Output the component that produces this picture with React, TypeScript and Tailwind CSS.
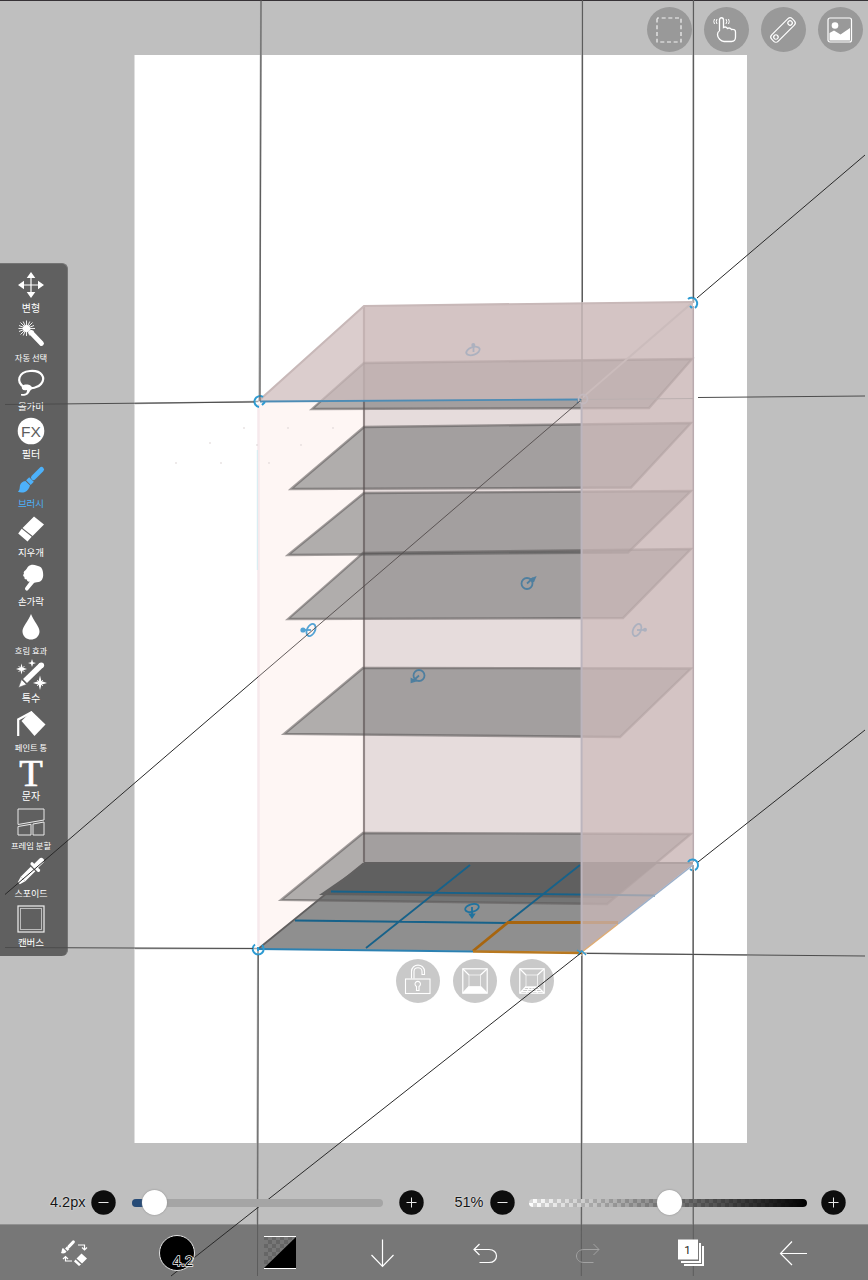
import React from "react";

const KR = "font-['Noto_Sans_CJK_KR',sans-serif]";

function Icon({ size = 28, children }: { size?: number; children: React.ReactNode }) {
  return (
    <svg width={size} height={size} viewBox="0 0 28 28" fill="none" stroke="none" className="block shrink-0 overflow-visible">
      {children}
    </svg>
  );
}

const tools: { label: string; size: string; active?: boolean; icon: React.ReactNode }[] = [
  {
    label: "변형",
    size: "text-[10px]",
    icon: (
      <>
        <path d="M14 4V24M4 14H24" stroke="#fff" strokeWidth="1.2" />
        <path d="M14 1L18.3 7H9.700ZM14 27L18.300 21H9.700ZM1 14L7 9.700V18.300ZM27 14L21 9.700V18.300Z" fill="#fff" />
      </>
    ),
  },
  {
    label: "자동 선택",
    size: "text-[8.300px]",
    icon: (
      <>
        <path d="M14 12.500L24.500 23.500" stroke="#fff" strokeWidth="4.800" strokeLinecap="round" />
        <circle cx="9.500" cy="8.500" r="3.600" fill="#fff" />
        <path d="M9.500 .5V16M1.500 8.500H18M3.500 2.500L15.500 14.500M15.500 2.500L3.500 14.500M6.200 1.500L12.800 15.500M12.800 1.500L6.200 15.500M2 5.500L17 11.500M17 5.500L2 11.500" stroke="#fff" strokeWidth=".9" />
      </>
    ),
  },
  {
    label: "올가미",
    size: "text-[9.500px]",
    icon: (
      <>
        <path d="M7 18C-1 13 1 3 13 2C25 1 29 9 24 15C21 19 14 20 10 18" stroke="#fff" strokeWidth="2.200" />
        <path d="M5 17C9 14 15 16 15 19C15 21 13 21 13 22C11 27 7 27 4 26.500V25C8 25 10 25 10 21C6 22 4 20 5 17Z" fill="#fff" />
      </>
    ),
  },
  {
    label: "필터",
    size: "text-[10px]",
    icon: (
      <>
        <circle cx="14" cy="14" r="13.300" fill="#fff" />
        <text x="14" y="19.700" fontSize="15.500" textAnchor="middle" fill="#5d5d5d" fontFamily="Liberation Sans, sans-serif">FX</text>
      </>
    ),
  },
  {
    label: "브러시",
    size: "text-[9.500px]",
    active: true,
    icon: (
      <>
        <path d="M16.500 11.500L24.500 3.500" stroke="#4db1fa" strokeWidth="5" strokeLinecap="round" />
        <path d="M12.200 11.200L16.800 15.800L13.700 18.900L9.100 14.300Z" fill="#4db1fa" />
        <path d="M8.400 15L13 19.600C12 23 10.500 25 8 26C5 27 2.500 26.500 .8 25.500C3 24.500 2.500 22 3 19.500C3.600 17 5.500 15.300 8.400 15Z" fill="#4db1fa" />
      </>
    ),
  },
  {
    label: "지우개",
    size: "text-[9.500px]",
    icon: (
      <path d="M17 1.500L27 9.500L15.600 21L5.500 13ZM4.700 13.800L14.700 21.800L10.500 26.500L1.200 18.500Z" fill="#fff" />
    ),
  },
  {
    label: "손가락",
    size: "text-[9.500px]",
    icon: (
      <path d="M13.300 1.300C17 0 20 2 22.500 2.600C25 3.300 26.200 7 26.200 11C26.200 14.500 24.500 17.500 21.500 18C19 18.500 17.500 18 16.500 19.500L11.300 25.800C9.500 28 7 25.500 8.400 23.500L12.800 17.600C11 18 9.800 17 10 15.500C8 15.800 7 14.500 7.500 13C5.500 12 6 10.500 7 9.700C5.900 7.500 8.700 6.500 9.700 4.800C10.700 3 11.500 1.900 13.300 1.300Z" fill="#fff" />
    ),
  },
  {
    label: "흐림 효과",
    size: "text-[8.300px]",
    icon: <path d="M14 1C16.500 8 23 14 22.500 19C22 24 18 26.500 14 26.500C10 26.500 6 24 5.500 19C5 14 11.500 8 14 1Z" fill="#fff" />,
  },
  {
    label: "특수",
    size: "text-[10px]",
    icon: (
      <>
        <path d="M8 20L24.500 4" stroke="#fff" strokeWidth="5.600" />
        <circle cx="24.300" cy="4.200" r="2.800" fill="#fff" />
        <path d="M4.500 18.500L9.500 23.500L1.500 26.500Z" fill="#fff" stroke="#5f5f5f" strokeWidth=".6" />
        <path d="M4.500 2.500L5.500 6.500L10 8L5.500 9.500L4.500 13.500L3.500 9.500L-1 8L3.500 6.500ZM15 -2L16 1.200L19 2L16 3L15 6L14 3L11 2L14 1.200ZM23 14.500L24.400 20L30 22L24.400 23.700L23 29L21.600 23.700L16 22L21.600 20Z" fill="#fff" />
        <path d="M1.500 5L7.500 11M7.500 5L1.500 11M20 19L26 25M26 19L20 25" stroke="#fff" strokeWidth=".8" />
      </>
    ),
  },
  {
    label: "페인트 통",
    size: "text-[8.300px]",
    icon: (
      <>
        <path d="M14.500 1L28.500 14.500L17.500 26L4.500 11Z" fill="#fff" />
        <path d="M15 2L1.200 9.500V26" stroke="#fff" strokeWidth="2.200" />
      </>
    ),
  },
  {
    label: "문자",
    size: "text-[10px]",
    icon: (
      <text x="14" y="26.500" fontSize="38.500" textAnchor="middle" fill="#fff" stroke="#fff" strokeWidth=".7" fontFamily="Liberation Serif, serif">T</text>
    ),
  },
  {
    label: "프레임 분할",
    size: "text-[8.300px]",
    icon: (
      <path d="M1 1H27V12L1 16.500ZM1 18.500L14 16.300V27H1ZM16 16L27 14V27H16Z" stroke="#e9e9e9" strokeWidth="1" />
    ),
  },
  {
    label: "스포이드",
    size: "text-[9px]",
    icon: (
      <>
        <path d="M16 12L6 22" stroke="#fff" strokeWidth="6.500" />
        <path d="M3.700 19.700L8.300 24.300L2.800 27.300L.8 25.300Z" fill="#fff" />
        <path d="M15 6.800L21.500 13.300" stroke="#fff" strokeWidth="3.200" strokeLinecap="round" />
        <path d="M19 9L24.300 3.700" stroke="#fff" strokeWidth="5.600" strokeLinecap="round" />
      </>
    ),
  },
  {
    label: "캔버스",
    size: "text-[9.500px]",
    icon: (
      <>
        <rect x="1" y="1" width="26" height="26" stroke="#eee" strokeWidth="1.200" />
        <rect x="3.500" y="3.500" width="21" height="21" stroke="#c5c5c5" strokeWidth=".9" />
      </>
    ),
  },
];

const shelves = [
  "312,409 364,363 692,359 649,408",
  "291,489 364,427 691,423 631,487.500",
  "288,555 364,493 691,491 628,552.500",
  "288,619 363,553 691,549 623,618",
  "284,734 363,668 691,668.500 620,737",
  "281,900 363,833 691,834 607,904",
];

function Scene() {
  return (
    <svg width="868" height="1280" viewBox="0 0 868 1280" className="absolute inset-0 -z-10">
      <rect x="134.500" y="55" width="612.500" height="1088" fill="#fff" />
      <g stroke="#a8a8a8" strokeWidth="2">
        <path d="M261 0L259.500 401M582.300 0L582 304M693.300 0V303" />
        <path d="M258 949L257.300 1224M582 952L581.500 1224M693 865V1224" />
        <path d="M135 403.500L259 401.500M135 948.500H258M582 953L747 955" strokeWidth="1.500" />
      </g>
      <polygon points="258.500,401 364,401 364,863 258,949" fill="#fef6f4" />
      <polygon points="364,306 693,302 693,864 364,863" fill="#e6dcdc" />
      <path d="M364 307V862" stroke="#aa9e9e" strokeWidth="2.200" />
      <polygon points="258,949 364,863 693,864 582,952" fill="#8f8f8f" />
      <g fill="rgb(86 87 87 / 0.46)" stroke="rgb(90 86 86 / 0.55)" strokeWidth="2.300">
        {shelves.map((points) => (
          <polygon key={points} points={points} />
        ))}
      </g>
      <polygon points="364,864 656,864 613,898 319,895" fill="#606060" />
      <path d="M364 863H693M364 863L258 949" stroke="#626060" strokeWidth="1.800" />
      <path d="M364 400V862" stroke="#4e4848" strokeOpacity=".25" strokeWidth="2" />
      <path d="M470 865L366 948M580 865L508 922M331 891.500L655 895.500M295 920.500L508 923" stroke="#17628a" strokeWidth="1.800" fill="none" />
      <path d="M258 949L473 951.500" stroke="#2c81b2" strokeWidth="2" />
      <path d="M473 951L508 922.500H618" stroke="#a7650f" strokeWidth="2.800" fill="none" />
      <path d="M473 951.500L582 953" stroke="#b8781f" strokeWidth="2.500" />
      <polygon points="258.500,401 364,306 693,302 582,399" fill="rgb(205 187 187 / 0.73)" />
      <polygon points="582,399 693,302 693,865 582,952" fill="rgb(205 187 187 / 0.73)" />
      <path d="M258.500 401L364 306L693 302" stroke="#c8b8b8" strokeWidth="2.200" fill="none" />
      <path d="M582 398L693 302" stroke="#cbbcbc" strokeWidth="2" />
      <path d="M582 303V398" stroke="#b8abab" strokeWidth="1.500" />
      <path d="M582 399.500L693 398.500" stroke="#bbb0b0" strokeWidth="1" />
      <path d="M260 401.500L580 399.500" stroke="#4d8cb5" strokeWidth="1.800" />
      <path d="M258.500 404V946" stroke="#f6e9ec" strokeWidth="2.500" />
      <path d="M257.300 450V570" stroke="#d2edf3" strokeWidth="1" />
      <path d="M581.600 404V950" stroke="#bcb5be" strokeWidth="2" />
      <path d="M693.300 306V862" stroke="#b9aaae" strokeWidth="1.500" />
      <path d="M582 952L618 924" stroke="#dfac73" strokeWidth="1.500" />
      <path d="M618 924L693 865" stroke="#9aafca" strokeWidth="1.500" />

      <g fill="none" strokeWidth="1.800">
        <g stroke="#acb1bf">
          <ellipse cx="473" cy="351" rx="7" ry="3.800" transform="rotate(-20 473 351)" />
          <path d="M473.500 352V345" />
          <circle cx="473.300" cy="345" r="2" fill="#acb1bf" stroke="none" />
          <ellipse cx="637" cy="630" rx="3.800" ry="6.500" transform="rotate(25 637 630)" />
          <path d="M637 630H645" />
          <circle cx="645" cy="629.700" r="2" fill="#acb1bf" stroke="none" />
        </g>
        <g stroke="#4f7f9f">
          <circle cx="527" cy="583.500" r="5.500" />
          <path d="M527 583.500L533 578M531 579L535 577.500L533.500 581Z" fill="#4f7f9f" />
          <circle cx="419" cy="675.500" r="5.500" />
          <path d="M419 675.500L414 680M411.500 679L411.500 682L415 681Z" fill="#4f7f9f" />
        </g>
        <g stroke="#54a3d4">
          <ellipse cx="311" cy="630" rx="4" ry="6.500" transform="rotate(25 311 630)" />
          <path d="M311 630H303" />
          <circle cx="303" cy="630" r="2.600" fill="#54a3d4" stroke="none" />
        </g>
        <g stroke="#20739f">
          <ellipse cx="472" cy="908" rx="7" ry="3.800" transform="rotate(-15 472 908)" />
          <path d="M472 907V915M470 914.500L472 917.500L474 914.500Z" fill="#20739f" />
        </g>
        <g stroke="#2d9bd2" strokeWidth="2">
          <path d="M263 397A5.500 5.500 0 1 0 259 407M262 405L265 402" />
          <path d="M688 299A5.500 5.500 0 1 1 695 308M690 306L692 308" />
          <path d="M255 944.500A5.500 5.500 0 1 0 262 945M258 951V947" />
          <path d="M688 862A5.500 5.500 0 1 1 695 870M690 869L692 870.500" />
          <path d="M578 955L582 951L586 955M577 950L581 953" strokeWidth="1.300" />
          <path d="M577 399L581 403M577 403L581 399" stroke="#527f9d" strokeWidth="1.300" />
        </g>
        <circle cx="583" cy="399" r="4.500" stroke="#c3b9be" />
      </g>
      <path d="M243 428h2M287 428h2M332 428h2M256 445h2M300 445h2M175 463h2M268 463h2M209 443h2M220 463h2" stroke="#ddd5d5" strokeWidth="1" />
    </svg>
  );
}

function Guides() {
  return (
    <svg width="868" height="1280" viewBox="0 0 868 1280" className="pointer-events-none absolute inset-0 z-10" fill="none">
      <g stroke="#5c5c5c" strokeWidth="1">
        <path d="M0 .5H868" stroke="#363236" strokeWidth="1.200" />
        <path d="M261 0L260 401M582.500 0V302M693.500 0V298" />
        <path d="M258.300 955L257.500 1276M581.700 956L581.300 1276M693.300 870V1276" />
        <path d="M5 404.500L254 402M698 397.500L865 396M5 947.500L253 948.500M587 953.500L865 956" stroke="#4c4c4c" />
      </g>
      <path d="M865 155L697 298M258 677L5 894.500M865 730L698 862M581 953L171 1276" stroke="#292929" strokeWidth="1" />
      <path d="M580 401L258 677" stroke="#514b4b" strokeWidth=".9" />
    </svg>
  );
}

function TopBar() {
  const cell = "flex h-[45px] w-[45px] items-center justify-center rounded-full bg-[#999]";
  return (
    <header className="flex h-14 shrink-0 justify-end gap-3 pt-[7px] pr-[5.500px]">
      <div className={cell}>
        <Icon>
          <rect x="2" y="2" width="24" height="24" stroke="#f4f4f4" strokeWidth="1.200" strokeDasharray="4 2.670" strokeDashoffset="2" />
        </Icon>
      </div>
      <div className={cell}>
        <Icon>
          <path d="M7.500 15V4C7.500 1 11.500 1 11.500 4V11.500C13 10.500 14.500 11 15.500 12.500C17 11.500 18.500 12 19.500 13.500C22 13 23.500 14 23.500 16V21C23.500 24 21.500 25.500 19.500 25.500H12C9 25.500 5.500 22 5.500 18.500C5.500 16.500 6 15.500 7.500 15" stroke="#fff" strokeWidth="1.300" />
          <path d="M5 3Q3.500 5.500 5 8M2.500 3Q1 5.500 2.500 8M14 3Q15.500 5.500 14 8M16.500 3Q18 5.500 16.500 8" stroke="#fff" strokeWidth="1" />
        </Icon>
      </div>
      <div className={cell}>
        <Icon>
          <g stroke="#fff" strokeWidth="1.200" transform="rotate(-45 14 14)">
            <rect x="-.5" y="9.500" width="29" height="9" rx="3" />
            <circle cx="4" cy="14" r="2.200" />
            <circle cx="24" cy="14" r="2.200" />
          </g>
        </Icon>
      </div>
      <div className={cell}>
        <Icon>
          <rect x="2" y="2" width="23.500" height="24" rx="2" stroke="#fff" strokeWidth="1.200" />
          <circle cx="9" cy="9.500" r="3.300" fill="#fff" />
          <path d="M3.500 17L8 14.500L14.500 18.500L24 12V24.500H3.500Z" fill="#fff" />
        </Icon>
      </div>
    </header>
  );
}

function Sidebar() {
  return (
    <aside className="mt-[207px] flex h-[693px] w-[68px] flex-col rounded-r-md border-t border-r border-[#747474] bg-[#606060] pt-[7px]">
      {tools.map((t) => (
        <div key={t.label} className="flex h-[48.800px] w-[62px] shrink-0 flex-col items-center">
          <Icon>{t.icon}</Icon>
          <span className={`${KR} ${t.size} ${t.active ? "text-[#4db1fa]" : "text-white"} mt-[3px] h-3 leading-3 font-normal whitespace-nowrap`}>
            {t.label}
          </span>
        </div>
      ))}
    </aside>
  );
}

function CanvasTools() {
  const cell = "flex h-[44px] w-[44px] items-center justify-center rounded-full bg-[#c6c6c6]/95";
  return (
    <div className="absolute top-[959px] left-[396px] flex gap-[13px]">
      <div className={cell}>
        <Icon>
          <g stroke="#fff" strokeWidth="1.100">
            <rect x="1.500" y="12" width="24.500" height="14.500" />
            <path d="M7.500 11.500V4.500C7.500 -4 20.500 -4 20.500 4.500V7.500H18V4.500C18 -.5 10 -.5 10 4.500V11.500" />
            <path d="M12.500 19.500A2.700 2.700 0 1 1 15 19.500V23.500H12.500Z" />
          </g>
        </Icon>
      </div>
      {[false, true].map((grid) => (
        <div key={String(grid)} className={cell}>
          <Icon>
            <rect x="1.800" y="1.800" width="24.400" height="24.400" stroke="#fff" strokeWidth="1.200" />
            <rect x="8" y="8" width="11.500" height="11.500" stroke="#eee" strokeWidth="1" />
            <path d="M2 2L8 8M26 2L19.500 8M2 26L8 19.500M26 26L19.500 19.500" stroke="#fff" strokeWidth="1.200" />
            {grid ? (
              <path d="M7 20.500H21M5 22.500H23M3.500 24.500H24.500M11.500 20L8.500 26M14 20V26M16.500 20L19.500 26" stroke="#fff" strokeWidth="1.100" />
            ) : (
              <path d="M8 19.500H20L26 26H2Z" fill="#fff" />
            )}
          </Icon>
        </div>
      ))}
    </div>
  );
}

function RoundButton({ plus = false }: { plus?: boolean }) {
  return (
    <svg width="25" height="25" viewBox="0 0 25 25" className="block shrink-0">
      <circle cx="12.500" cy="12.500" r="12.200" fill="#0d0d0d" />
      <path d={plus ? "M7.500 12.500H17.500M12.500 7.500V17.500" : "M7.500 12.500H17.500"} stroke="#e8e8e8" strokeWidth="1" />
    </svg>
  );
}

function Sliders() {
  const label = "text-right font-['Liberation_Sans',sans-serif] text-[14.500px] leading-none text-[#151515] [text-shadow:0_0_2px_#fff]";
  return (
    <div className="relative z-20 flex h-[45px] shrink-0 items-center pt-[2px]">
      <span className={`${label} w-[85.500px]`}>4.2px</span>
      <div className="ml-[5.500px] flex"><RoundButton /></div>
      <div className="ml-4 flex h-2 w-[250.500px] items-center rounded-full bg-[#a5a5a5]">
        <div className="h-2 w-[12px] rounded-l-full bg-[#264b77]" />
        <div className="-ml-[2px] h-[25px] w-[25px] shrink-0 rounded-full bg-white shadow-[0_0_2px_#888]" />
      </div>
      <div className="ml-[16px] flex"><RoundButton plus /></div>
      <span className={`${label} w-[60px]`}>51%</span>
      <div className="ml-[6px] flex"><RoundButton /></div>
      <div className="ml-[14px] flex h-2 w-[278px] items-center">
        <svg width="278" height="8" className="block shrink-0">
          <defs>
            <pattern id="trackChecks" width="8" height="8" patternUnits="userSpaceOnUse">
              <rect width="8" height="8" fill="#fff" />
              <path d="M0 0H4V4H0ZM4 4H8V8H4Z" fill="#d8d8d8" />
            </pattern>
            <linearGradient id="opacity">
              <stop offset="0" stopColor="#000" stopOpacity="0" />
              <stop offset="1" stopColor="#000" />
            </linearGradient>
          </defs>
          <rect width="278" height="8" rx="4" fill="url(#trackChecks)" />
          <rect width="278" height="8" rx="4" fill="url(#opacity)" />
        </svg>
        <div className="-ml-[149.500px] h-[25px] w-[25px] shrink-0 rounded-full bg-white shadow-[0_0_2px_#888]" />
      </div>
      <div className="ml-[14px] flex"><RoundButton plus /></div>
    </div>
  );
}

function BottomBar() {
  return (
    <footer className="grid h-14 shrink-0 grid-cols-8 place-items-center border-t border-[#919191] bg-[#777] pr-[23px] pl-[23px]">
      <div className="relative z-20">
        <Icon>
          <path d="M9 7.500L13.300 3" stroke="#fff" strokeWidth="3.200" strokeLinecap="round" />
          <path d="M6 8.500L8.500 11" stroke="#fff" strokeWidth="2.600" />
          <path d="M3 9L6.500 12.500C5.500 14.500 3 15 .8 14C2.300 13 1 10.500 3 9Z" fill="#fff" />
          <path d="M18 6H24.500V10M22 8.500L24.500 11L27 8.500M12 22H5.500V18M3 20L5.500 17.500L8 20" stroke="#fff" strokeWidth="1.200" />
          <path d="M21.500 14.500L27 19.500L22 24.500L16.500 19.500ZM15.500 20.500L21 25.500L19 27L14 22.500Z" fill="#fff" />
        </Icon>
      </div>
      <div className="relative z-20">
        <svg width="36" height="36" viewBox="0 0 36 36" className="block overflow-visible">
          <circle cx="18" cy="18" r="17.500" fill="#000" stroke="#e3e3e3" />
          <text x="24" y="30.500" textAnchor="middle" fontSize="14.500" fontFamily="Liberation Sans, sans-serif" fill="#000" stroke="#eee" strokeWidth="1.500" paintOrder="stroke">4.2</text>
        </svg>
      </div>
      <div className="relative z-20">
        <svg width="32" height="33" viewBox="0 0 32 33" className="block">
          <defs>
            <pattern id="swatchChecks" width="8" height="8" patternUnits="userSpaceOnUse">
              <rect width="8" height="8" fill="#777" />
              <path d="M0 0H4V4H0ZM4 4H8V8H4Z" fill="#666" />
            </pattern>
          </defs>
          <rect width="32" height="33" fill="url(#swatchChecks)" />
          <path d="M32 1V32H0Z" fill="#000" />
          <path d="M0 .5H32M0 32.500H32" stroke="#fff" />
        </svg>
      </div>
      <div className="relative z-20">
        <Icon><path d="M13.500 .5V27.500M2.500 16L13.500 27.500L24.500 16" stroke="#fff" strokeWidth="1.200" /></Icon>
      </div>
      <div className="relative z-20">
        <Icon><path d="M8.500 5L3 10.500L8.500 16M3 10.500H18C28 10.500 28 23.500 18 23.500H8.500" stroke="#fff" strokeWidth="1.200" /></Icon>
      </div>
      <div className="relative z-20">
        <Icon><path d="M19.500 5L25 10.500L19.500 16M25 10.500H10C0 10.500 0 23.500 10 23.500H19.500" stroke="#a2a2a2" strokeWidth="1" /></Icon>
      </div>
      <div className="relative z-20">
        <Icon>
          <path d="M7 7H27V27H7Z" fill="#fff" />
          <path d="M4 4H25V25H4Z" fill="#777" />
          <path d="M4 4H24V24H4Z" fill="#fff" />
          <path d="M1 1H22V22H1Z" fill="#777" />
          <path d="M1 .5H21V20.500H1Z" fill="#fff" />
          <text x="10.500" y="15" fontSize="11.500" textAnchor="middle" fill="#222" fontFamily="Roboto, sans-serif">1</text>
        </Icon>
      </div>
      <div className="relative z-20">
        <Icon><path d="M27 14.500H.5M12 2.500L.5 14.500L12 26" stroke="#fff" strokeWidth="1.200" /></Icon>
      </div>
    </footer>
  );
}

export default function App() {
  return (
    <div className="relative isolate flex h-[1280px] w-[868px] flex-col overflow-hidden bg-[#bfbfbf]">
      <Scene />
      <TopBar />
      <main className="min-h-0 flex-1">
        <Sidebar />
      </main>
      <CanvasTools />
      <Sliders />
      <BottomBar />
      <Guides />
    </div>
  );
}
